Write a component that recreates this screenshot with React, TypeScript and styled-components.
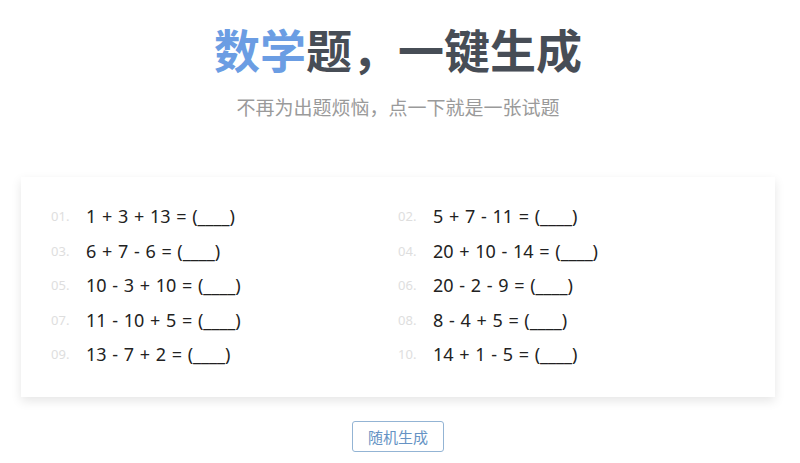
import React from "react";
import styled, { createGlobalStyle } from "styled-components";

const Global = createGlobalStyle`
  html, body { margin: 0; padding: 0; background: #ffffff; }
  body { font-family: "Noto Sans", "Noto Sans CJK SC", sans-serif; }
`;

const Page = styled.div`
  width: 796px;
  display: flex;
  flex-direction: column;
  align-items: center;
`;

const Title = styled.h1`
  margin: 22px 0 0;
  height: 52px;
  line-height: 52px;
  font-size: 46px;
  font-weight: 700;
  color: #474d56;
  font-family: "Noto Sans CJK SC", sans-serif;
`;

const Accent = styled.span`
  color: #6b9de3;
`;

const Subtitle = styled.p`
  margin: 20px 0 0;
  height: 26px;
  line-height: 26px;
  font-size: 19px;
  color: #9a9a9a;
  font-family: "Noto Sans CJK SC", sans-serif;
`;

const Card = styled.section`
  box-sizing: border-box;
  width: 754px;
  margin: 57px 0 0;
  padding: 22px 30px 25px;
  background: #fff;
  box-shadow: 0 4px 10px rgba(0, 0, 0, 0.1);
  display: grid;
  grid-template-columns: 1fr 1fr;
  grid-auto-rows: 34.5px;
`;

const Row = styled.div`
  display: flex;
  align-items: center;
`;

const Index = styled.span`
  width: 35px;
  flex: none;
  font-size: 13px;
  color: #dedede;
  font-family: "Noto Sans", sans-serif;
`;

const Equation = styled.span`
  font-size: 18px;
  word-spacing: 1px;
  color: #222;
  font-family: "Noto Sans", sans-serif;
`;

const Button = styled.button`
  margin-top: 24px;
  width: 92px;
  height: 31px;
  border: 1px solid #93b4d4;
  border-radius: 3px;
  background: #fff;
  color: #6693c4;
  font-size: 15px;
  font-family: "Noto Sans CJK SC", sans-serif;
  cursor: pointer;
  padding: 0;
`;

const problems = [
  "1 + 3 + 13",
  "5 + 7 - 11",
  "6 + 7 - 6",
  "20 + 10 - 14",
  "10 - 3 + 10",
  "20 - 2 - 9",
  "11 - 10 + 5",
  "8 - 4 + 5",
  "13 - 7 + 2",
  "14 + 1 - 5",
];

export default function App() {
  return (
    <Page>
      <Global />
      <Title>
        <Accent>数学</Accent>题，一键生成
      </Title>
      <Subtitle>不再为出题烦恼，点一下就是一张试题</Subtitle>
      <Card>
        {problems.map((p, i) => (
          <Row key={i}>
            <Index>{String(i + 1).padStart(2, "0")}.</Index>
            <Equation>{p} = (____)</Equation>
          </Row>
        ))}
      </Card>
      <Button>随机生成</Button>
    </Page>
  );
}
